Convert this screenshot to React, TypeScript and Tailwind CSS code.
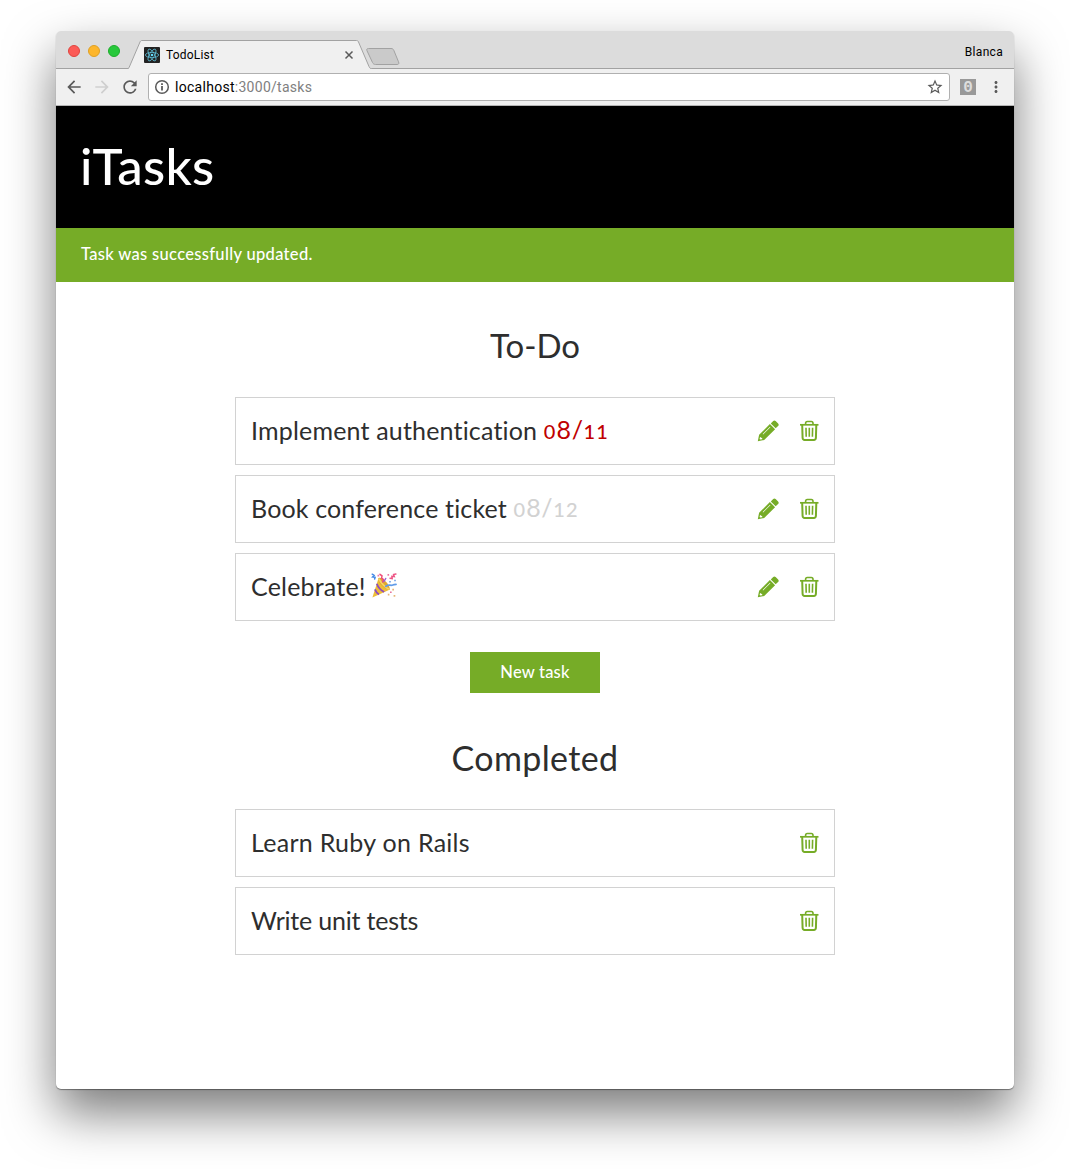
import React from "react";
import {
  MdArrowBack,
  MdArrowForward,
  MdRefresh,
  MdStarBorder,
  MdMoreVert,
} from "react-icons/md";

function ReactLogo() {
  return (
    <svg width="16" height="16" viewBox="0 0 16 16" className="shrink-0">
      <rect width="16" height="16" rx="1" fill="#222" />
      <g fill="none" stroke="#5fbfd8" strokeWidth="0.8">
        <ellipse cx="8" cy="8" rx="6.6" ry="2.6" />
        <ellipse cx="8" cy="8" rx="6.6" ry="2.6" transform="rotate(60 8 8)" />
        <ellipse cx="8" cy="8" rx="6.6" ry="2.6" transform="rotate(120 8 8)" />
      </g>
      <circle cx="8" cy="8" r="1.3" fill="#61dafb" />
    </svg>
  );
}

function InfoIcon() {
  return (
    <svg width="16" height="16" viewBox="0 0 16 16" fill="none" stroke="currentColor" strokeWidth="1.500">
      <circle cx="8" cy="8" r="6.300" />
      <path d="M8 4.200v1.700M8 7v4.600" strokeWidth="1.800" />
    </svg>
  );
}

function PencilIcon() {
  return (
    <svg width="22" height="22" viewBox="0 0 22 22" fill="#76ac27">
      <path d="M16.200 1a1.800 1.800 0 0 1 2.400 0l2.500 2.500a1.800 1.800 0 0 1 0 2.500l-2.400 2.300-4.900-4.900z" />
      <path
        fillRule="evenodd"
        d="M12.900 4l5.200 5.200L7.200 20 .8 21.300l1.300-6.500zM13 6.800L5.700 14.100l.4.400 7.300-7.300zM3 17.200l-.4 1.800.7.600 1.900-.4v-1.100H4.200v-.9z"
      />
    </svg>
  );
}

function TrashIcon() {
  return (
    <svg width="20" height="22" viewBox="0 0 20 22" fill="none" stroke="#76ac27">
      <path d="M1 4.800h18.500" strokeWidth="1.700" />
      <path d="M6.600 4.600V3.200c0-1.200.6-1.700 1.700-1.700h4c1.100 0 1.700.5 1.700 1.700v1.400" strokeWidth="1.600" />
      <path d="M3.200 5l.4 13c.1 1.300.7 1.900 2 1.900h9.300c1.300 0 1.900-.6 2-1.900l.4-13" strokeWidth="2" />
      <path d="M7 7.800l.2 9M10.300 7.800v9M13.600 7.800l-.2 9" strokeWidth="1.600" />
    </svg>
  );
}

function PartyPopper() {
  return (
    <svg width="26" height="26" viewBox="0 0 26 26" className="ml-[5px]">
      <path d="M1.400 24.600L7.500 5.200c3.800 1 9.800 6.700 11 11.500z" fill="#edbd38" />
      <path d="M7.500 5.200c1-1.200 4.600.6 7.400 3.500 2.900 2.900 4.600 6.700 3.600 8-1.200 1.100-4.600-.8-7.400-3.600C8.300 10.300 6.600 6.500 7.500 5.200z" fill="#e0a92e" />
      <g fill="none" strokeWidth="1.800">
        <path d="M5.800 10.700c1.200 3.400 3.800 6.200 7.300 8.400" stroke="#8c4cc0" />
        <path d="M3.900 16.400c.9 2.300 2.200 3.900 4.100 5.200" stroke="#8c4cc0" />
        <path d="M7.700 5.600c2.500 4.700 5.500 8 10.300 10.700" stroke="#f6d565" />
      </g>
      <g fill="none" strokeWidth="1.500" strokeLinecap="round">
        <path d="M1.200 1.200l1.900 1.200-1.500 1.600 2.500.3L3.600 6" stroke="#4389e5" />
        <path d="M9 1.300l2 1.500-.4 2.400 1.900 1.400-.8 2.400" stroke="#ee4b78" />
        <path d="M24.900 1.100l-2.300.5.700 2-2.400-.3.300 2.200-2.200-.3" stroke="#ed5686" />
        <path d="M14.800 13.400c2-2.700 5.500.1 8.500-1.800l1.700-.2" stroke="#619be8" strokeWidth="1.800" />
        <path d="M13 8.500l1.700-3" stroke="#9c61cf" />
      </g>
      <path d="M6.500 1.700h1.700v1.700H6.500zM16.500 1h1.600v1.700h-1.600z" fill="#ec76a5" />
      <path d="M23.200 6.700h1.600v1.600h-1.600zM18.200 7.900h1.600v1.600h-1.600z" fill="#6d9ee5" />
      <path d="M21.300 15.800h1.700v1.700h-1.700zM22.600 22.100h1.700v1.700h-1.700zM16.800 20.800h1.600v1.600h-1.600z" fill="#e7b678" />
      <path d="M19.100 18.500h1.500V20h-1.500z" fill="#e5658f" />
    </svg>
  );
}

/* Old-style figures: 0, 1 and 2 sit at x-height while 8 keeps full height. */
function DueDate({ value, className }: { value: string; className: string }) {
  return (
    <span className={className}>
      {value.split("").map((c, i) =>
        "012".includes(c) ? (
          <span key={i} className="text-[20px] font-medium tracking-[1.200px]">{c}</span>
        ) : (
          <span key={i} className="tracking-[0.500px]">{c}</span>
        )
      )}
    </span>
  );
}

function TaskRow({ children, editable = false }: { children: React.ReactNode; editable?: boolean }) {
  return (
    <li className="flex h-[68px] items-center justify-between border border-[#d2d2d2] pr-[15px] pl-[15px]">
      <div className="flex items-center pb-[2px] text-[25px] leading-[30px] whitespace-pre">{children}</div>
      <div className="flex items-center gap-5">
        {editable && <button aria-label="Edit"><PencilIcon /></button>}
        <button aria-label="Delete"><TrashIcon /></button>
      </div>
    </li>
  );
}

function BrowserChrome() {
  return (
    <div className="h-[75px] overflow-hidden rounded-t-[5px] bg-[#dcdcdc] font-['Roboto',sans-serif] text-black">
      <div className="relative flex h-[38px] items-center border-b border-[#a2a2a2] pt-[2px]">
        <div className="flex gap-2 pl-3">
          <i className="size-3 rounded-full border border-[#e0443e] bg-[#fc5b57]" />
          <i className="size-3 rounded-full border border-[#dfa023] bg-[#fdb62c]" />
          <i className="size-3 rounded-full border border-[#1dad2b] bg-[#27c83b]" />
        </div>
        <svg className="absolute top-[8px] left-[70px]" width="280" height="31" viewBox="0 0 280 31">
          <path d="M2.500 29.500L14 3C14.600 1.800 15 1.500 16 1.500H230.500C231.500 1.500 232 1.800 232.500 3L243 27.500C243.700 29 244 29.500 245.500 29.500V31H2.500z" fill="#f0f0f0" />
          <path d="M0 29.500H1.500C2.500 29.500 2.800 29 3.300 28L14 3C14.600 1.800 15 1.500 16 1.500H230.500C231.500 1.500 232 1.800 232.500 3L243 27.500C243.700 29 244 29.500 245.500 29.500" fill="none" stroke="#a2a2a2" />
          <path d="M242.500 9.500H265c1.500 0 2.200.5 2.800 1.800l4.700 11.500c.7 1.700.3 2.700-1.300 2.700H249.500c-1.500 0-2.500-.8-3-2L240.900 11.500c-.5-1.200.1-2 1.600-2z" fill="#cacaca" stroke="#a2a2a2" />
        </svg>
        <div className="relative ml-6 flex w-[210px] items-center pt-[9px]">
          <ReactLogo />
          <span className="ml-[6px] text-[12px] leading-4 tracking-[0.200px]">TodoList</span>
          <svg className="ml-auto" width="10" height="10" viewBox="0 0 10 10">
            <path d="M1.500 1.500l7 7M8.500 1.500l-7 7" stroke="#5a5a5a" strokeWidth="1.500" />
          </svg>
        </div>
        <span className="mt-[3px] mr-[11px] ml-auto text-[12px] leading-4 tracking-[0.300px]">Blanca</span>
      </div>
      <div className="flex h-[37px] items-center border-b border-[#b4b4b4] bg-[#f0f0f0] pl-2 text-[#5a5a5a]">
        <MdArrowBack size={20} />
        <MdArrowForward size={20} className="ml-2 text-[#cfcfcf]" />
        <MdRefresh size={20} className="ml-2" />
        <div className="ml-2 flex h-7 w-[802px] items-center rounded-[3px] border border-[#b0b0b0] bg-white pr-[5px] pl-[5px]">
          <InfoIcon />
          <span className="ml-[5px] text-[14px] leading-5 tracking-[0.280px] text-[#808080]">
            <span className="text-black">localhost</span>:3000/tasks
          </span>
          <MdStarBorder size={18} className="ml-auto" />
        </div>
        <div className="ml-[10px] flex size-4 items-center justify-center bg-[#999] pt-[2px] font-['Liberation_Mono',monospace] text-[16px] leading-none font-bold text-[#ddd]">0</div>
        <MdMoreVert size={18} className="ml-[11px]" />
      </div>
    </div>
  );
}

export default function App() {
  return (
    <div className="h-[1169px] w-[1070px] overflow-hidden bg-white pt-[31px] pl-[56px]">
      <main className="h-[1058px] w-[958px] rounded-[5px] bg-white font-['Lato',sans-serif] text-[#2e2e2e] shadow-[0_1px_1px_0_rgba(0,0,0,0.400),0_24px_50px_rgba(0,0,0,0.520)]">
        <BrowserChrome />
        <header className="h-[122px] bg-black pt-[30px] pl-[24px] text-white">
          <h1 className="text-[51px] leading-[60px] font-medium tracking-[0.300px]">iTasks</h1>
        </header>
        <p className="h-[54px] bg-[#76ac27] pl-[25px] text-[16.500px] leading-[53px] font-medium tracking-[0.320px] text-white">Task was successfully updated.</p>
        <section className="mx-auto flex w-[600px] flex-col items-center pt-[43px]">
          <h2 className="text-[33px] leading-[40px]">To-Do</h2>
          <ul className="mt-[32px] flex w-full flex-col gap-[10px]">
            <TaskRow editable>
              <span className="tracking-[0.180px]">Implement authentication </span>
              <DueDate value="08/11" className="text-[#c00000]" />
            </TaskRow>
            <TaskRow editable>
              <span className="tracking-[0.150px]">Book conference ticket </span>
              <DueDate value="08/12" className="text-[#d2d2d2]" />
            </TaskRow>
            <TaskRow editable>
              <span className="tracking-[0.200px]">Celebrate!</span>
              <PartyPopper />
            </TaskRow>
          </ul>
          <button className="mt-[31px] h-[41px] w-[130px] bg-[#76ac27] text-[16.500px] font-medium tracking-[0.200px] text-white">New task</button>
          <h2 className="mt-[45px] text-[34px] leading-[40px] tracking-[0.350px]">Completed</h2>
          <ul className="mt-[31px] flex w-full flex-col gap-[10px]">
            <TaskRow><span className="tracking-[0.280px]">Learn Ruby on Rails</span></TaskRow>
            <TaskRow><span className="tracking-[-0.200px]">Write unit tests</span></TaskRow>
          </ul>
        </section>
      </main>
    </div>
  );
}
